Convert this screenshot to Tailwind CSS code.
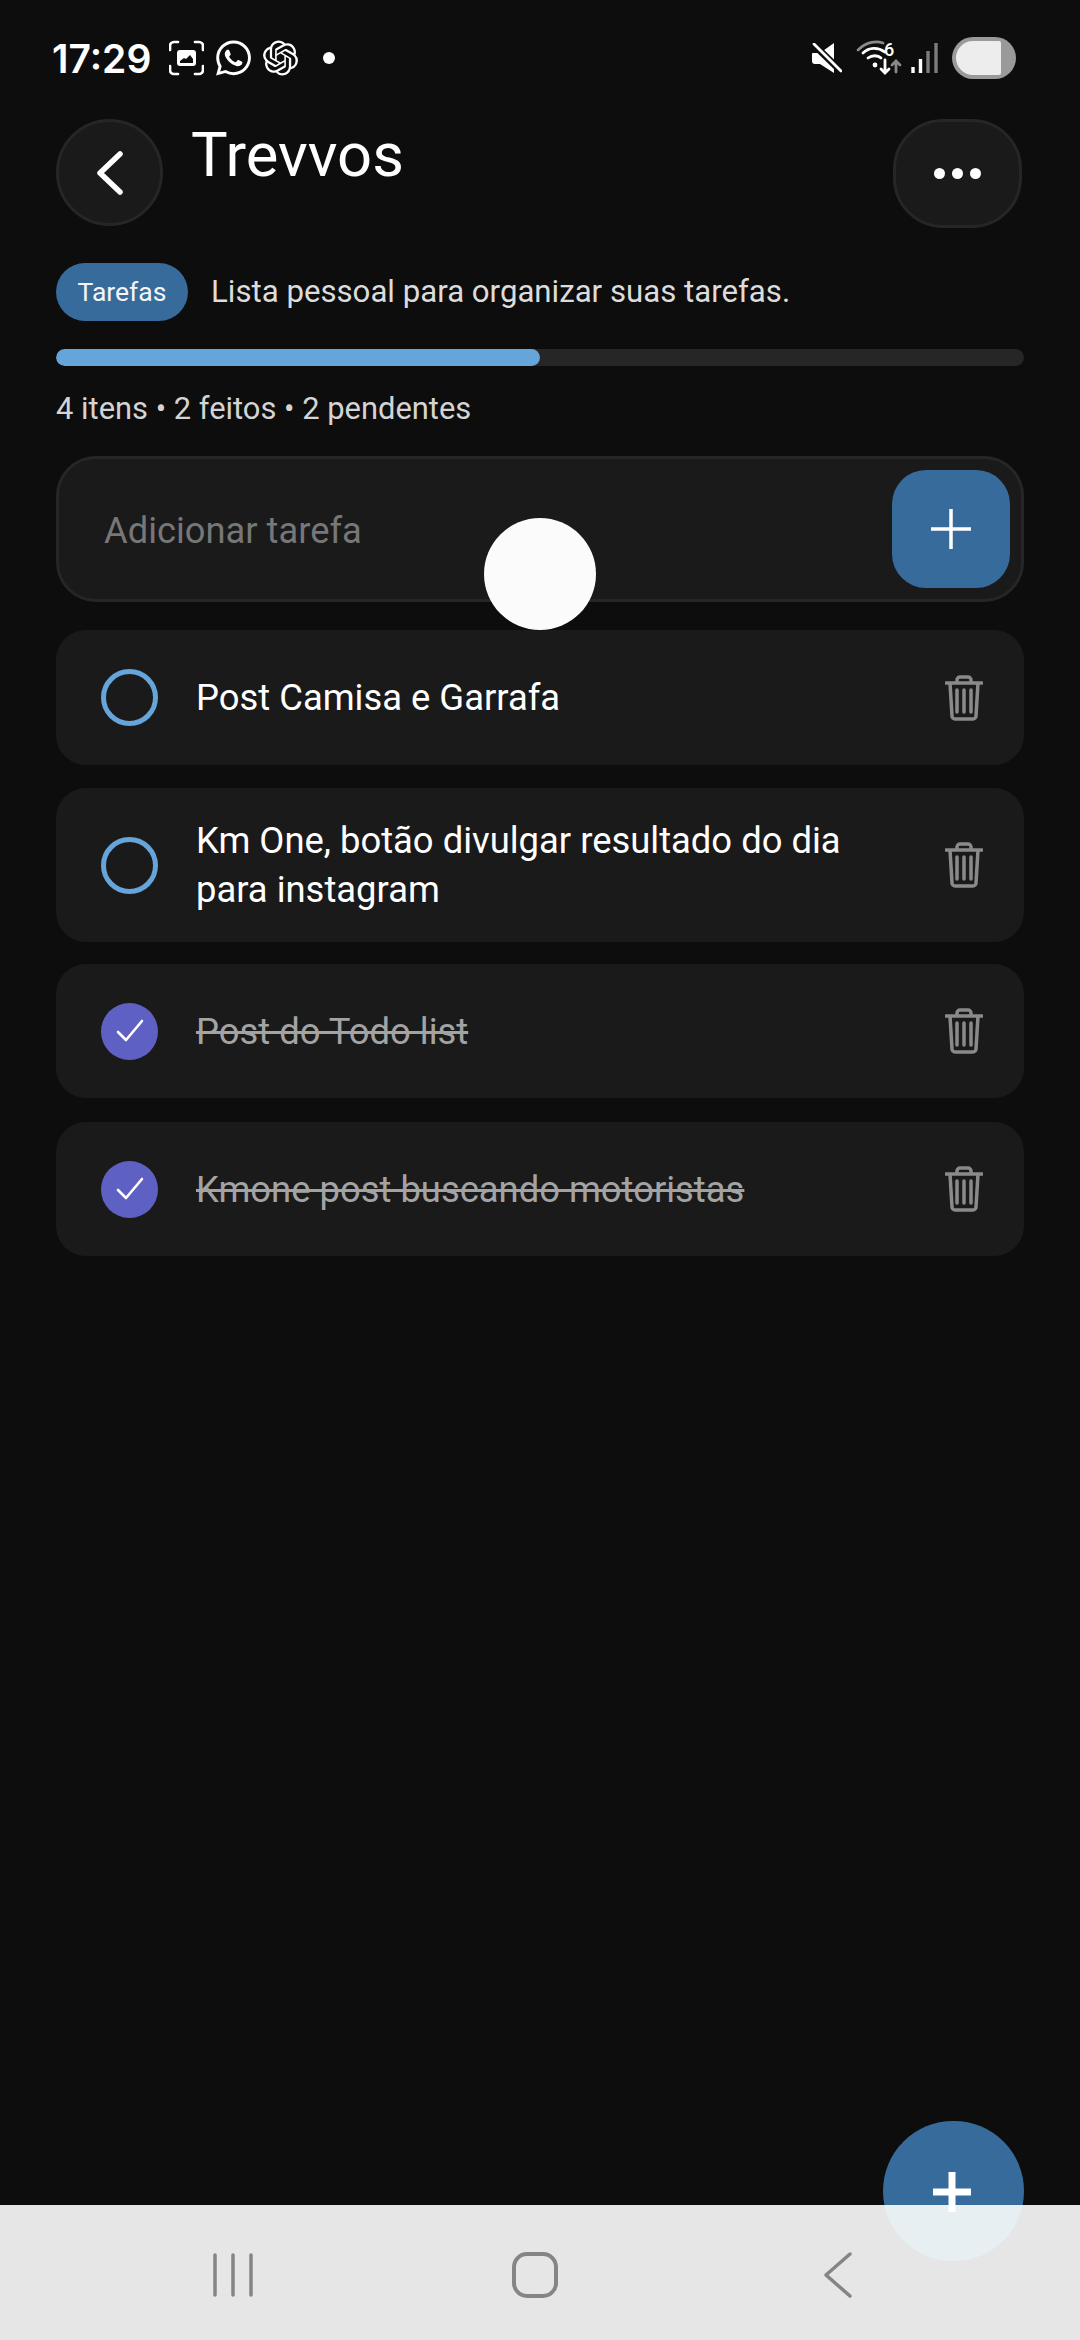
<!DOCTYPE html>
<html lang="pt">
<head>
<meta charset="utf-8">
<script src="https://cdn.jsdelivr.net/npm/@tailwindcss/browser@4"></script>
</head>
<body class="bg-[#0d0d0d]">
<div class="relative w-[1080px] h-[2340px] overflow-hidden bg-[#0d0d0d] font-['Roboto',sans-serif] text-white flex flex-col">

  <!-- status bar -->
  <div class="h-[116px] mb-[3px] pl-[52px] pr-[64px] flex items-center justify-between">
    <div class="flex items-center">
      <span class="font-['Inter',sans-serif] font-semibold text-[39px] leading-none w-[117px]">17:29</span>
      <svg class="w-[35px] h-[36px]" viewBox="0 0 35 36" fill="none" stroke="#fff" stroke-width="2.700" stroke-linecap="round">
        <path d="M9 2H5a4 4 0 0 0-4 4v4M26 2h4a4 4 0 0 1 4 4v4M9 34H5a4 4 0 0 1-4-4v-4M26 34h4a4 4 0 0 0 4-4v-4"/>
        <rect x="8" y="10" width="19" height="16" rx="3" fill="#fff" stroke="none"/>
        <path d="M11 23v-2l4-3 2 1 4-4 3 4v4z" fill="#0d0d0d" stroke="none"/>
      </svg>
      <svg class="ml-[12px] w-[35px] h-[36px]" viewBox="0 0 24 24" fill="#fff"><path d="M17.472 14.382c-.297-.149-1.758-.867-2.03-.967-.273-.099-.471-.148-.67.15-.197.297-.767.966-.94 1.164-.173.199-.347.223-.644.075-.297-.15-1.255-.463-2.39-1.475-.883-.788-1.48-1.761-1.653-2.059-.173-.297-.018-.458.13-.606.134-.133.298-.347.446-.52.149-.174.198-.298.298-.497.099-.198.05-.371-.025-.52-.075-.149-.669-1.612-.916-2.207-.242-.579-.487-.5-.669-.51-.173-.008-.371-.01-.57-.01-.198 0-.52.074-.792.372-.272.297-1.04 1.016-1.04 2.479 0 1.462 1.065 2.875 1.213 3.074.149.198 2.096 3.2 5.077 4.487.709.306 1.262.489 1.694.625.712.227 1.36.195 1.871.118.571-.085 1.758-.719 2.006-1.413.248-.694.248-1.289.173-1.413-.074-.124-.272-.198-.57-.347m-5.421 7.403h-.004a9.87 9.87 0 01-5.031-1.378l-.361-.214-3.741.982.998-3.648-.235-.374a9.86 9.86 0 01-1.51-5.26c.001-5.45 4.436-9.884 9.888-9.884 2.64 0 5.122 1.03 6.988 2.898a9.825 9.825 0 012.893 6.994c-.003 5.45-4.437 9.884-9.885 9.884m8.413-18.297A11.815 11.815 0 0012.05 0C5.495 0 .16 5.335.157 11.892c0 2.096.547 4.142 1.588 5.945L.057 24l6.305-1.654a11.882 11.882 0 005.683 1.448h.005c6.554 0 11.89-5.335 11.893-11.893a11.821 11.821 0 00-3.48-8.413z"/></svg>
      <svg class="ml-[12px] w-[35px] h-[36px]" viewBox="0 0 24 24" fill="#fff"><path d="M22.2819 9.8211a5.9847 5.9847 0 0 0-.5157-4.9108 6.0462 6.0462 0 0 0-6.5098-2.9A6.0651 6.0651 0 0 0 4.9807 4.1818a5.9847 5.9847 0 0 0-3.9977 2.9 6.0462 6.0462 0 0 0 .7427 7.0966 5.98 5.98 0 0 0 .511 4.9107 6.051 6.051 0 0 0 6.5146 2.9001A5.9847 5.9847 0 0 0 13.2599 24a6.0557 6.0557 0 0 0 5.7718-4.2058 5.9894 5.9894 0 0 0 3.9977-2.9001 6.0557 6.0557 0 0 0-.7475-7.0729zm-9.022 12.6081a4.4755 4.4755 0 0 1-2.8764-1.0408l.1419-.0804 4.7783-2.7582a.7948.7948 0 0 0 .3927-.6813v-6.7369l2.02 1.1686a.071.071 0 0 1 .038.052v5.5826a4.504 4.504 0 0 1-4.4945 4.4944zm-9.6607-4.1254a4.4708 4.4708 0 0 1-.5346-3.0137l.142.0852 4.783 2.7582a.7712.7712 0 0 0 .7806 0l5.8428-3.3685v2.3324a.0804.0804 0 0 1-.0332.0615L9.74 19.9502a4.4992 4.4992 0 0 1-6.1408-1.6464zM2.3408 7.8956a4.485 4.485 0 0 1 2.3655-1.9728V11.6a.7664.7664 0 0 0 .3879.6765l5.8144 3.3543-2.0201 1.1685a.0757.0757 0 0 1-.071 0l-4.8303-2.7865A4.504 4.504 0 0 1 2.3408 7.872zm16.5963 3.8558L13.1038 8.364 15.1192 7.2a.0757.0757 0 0 1 .071 0l4.8303 2.7913a4.4944 4.4944 0 0 1-.6765 8.1042v-5.6772a.79.79 0 0 0-.407-.667zm2.0107-3.0231l-.142-.0852-4.7735-2.7818a.7759.7759 0 0 0-.7854 0L9.409 9.2297V6.8974a.0662.0662 0 0 1 .0284-.0615l4.8303-2.7866a4.4992 4.4992 0 0 1 6.6802 4.66zM8.3065 12.863l-2.02-1.1638a.0804.0804 0 0 1-.038-.0567V6.0742a4.4992 4.4992 0 0 1 7.3757-3.4537l-.142.0805L8.704 5.459a.7948.7948 0 0 0-.3927.6813zm1.0976-2.3654l2.602-1.4998 2.6069 1.4998v2.9994l-2.5974 1.4997-2.6067-1.4997Z"/></svg>
      <span class="ml-[25px] w-[12px] h-[12px] rounded-full bg-white"></span>
    </div>
    <div class="flex items-center">
      <svg class="w-[30px] h-[30px]" viewBox="0 0 30 30" fill="#fff"><path d="M0 11q0-1 1-1h7L22 0v30L8 21H3a3 3 0 0 1-3-3z"/><path d="M0 0l30 29" stroke="#0d0d0d" stroke-width="7"/><path d="M2 1l27 27" stroke="#fff" stroke-width="2.800" stroke-linecap="round"/></svg>
      <svg class="ml-[15px] w-[44px] h-[32px] overflow-visible" viewBox="0 0 44 32" fill="none" stroke-linecap="round">
        <path d="M1 8C10-1 20-1 26 1" stroke="#8a8a8a" stroke-width="2.800"/>
        <path d="M6 11c6-6 15-6 22-1M11 16c4-3 10-3 13 0" stroke="#fff" stroke-width="2.800"/>
        <circle cx="18" cy="23" r="2.400" fill="#fff"/>
        <path d="M28 18v13M24 27l4 4 4-4" stroke="#fff" stroke-width="2.800"/>
        <path d="M39 30V19M35 23l4-4 4 4" stroke="#8a8a8a" stroke-width="2.800"/>
        <text x="27" y="14" font-size="18" font-family="Roboto" fill="#fff" stroke="none" font-weight="500">6</text>
      </svg>
      <svg class="ml-[10px] w-[27px] h-[30px]" viewBox="0 0 27 30" fill="none" stroke-width="3.400"><path d="M2 30v-6M9.500 30v-14" stroke="#fff"/><path d="M17 30V8M25 30V0" stroke="#7c7c7c"/></svg>
      <div class="ml-[14px] w-[64px] h-[42px] rounded-[21px] bg-[#9a9a9a] p-[4px]">
        <div class="w-[45px] h-[34px] rounded-l-[17px] rounded-r-[2px] bg-[#ededed]"></div>
      </div>
    </div>
  </div>

  <!-- header -->
  <div class="pl-[56px] pr-[58px] flex items-start justify-between h-[109px]">
    <div class="flex items-start">
      <button class="w-[107px] h-[107px] rounded-full bg-[#1a1a1a] border-[3px] border-[#262626] flex items-center justify-center">
        <svg class="w-[26px] h-[44px]" viewBox="0 0 26 44" fill="none" stroke="#fff" stroke-width="5.500" stroke-linecap="round" stroke-linejoin="round"><path d="M23 3L3 22l20 19"/></svg>
      </button>
      <h1 class="ml-[28px] mt-[1px] text-[61.500px] font-normal leading-[70px]">Trevvos</h1>
    </div>
    <button class="w-[129px] h-[109px] rounded-[50px] bg-[#1a1a1a] border-[3px] border-[#262626] flex items-center justify-center gap-[7px]">
      <span class="w-[11px] h-[11px] rounded-full bg-white"></span>
      <span class="w-[11px] h-[11px] rounded-full bg-white"></span>
      <span class="w-[11px] h-[11px] rounded-full bg-white"></span>
    </button>
  </div>

  <!-- chip row -->
  <div class="mt-[35px] px-[56px] flex items-center h-[58px]">
    <span class="w-[132px] h-[58px] rounded-[29px] bg-[#376b9c] flex items-center justify-center text-[26.500px] text-[#f5f5f5]">Tarefas</span>
    <span class="ml-[23px] text-[31.200px] text-[#dcdcdc]">Lista pessoal para organizar suas tarefas.</span>
  </div>

  <!-- progress -->
  <div class="mt-[28px] mx-[56px] h-[17px] rounded-full bg-[#262626] overflow-hidden">
    <div class="h-full w-1/2 rounded-full bg-[#65a5da]"></div>
  </div>
  <p class="mt-[23px] mb-[-1px] px-[56px] text-[30.900px] leading-[40px] text-[#d4d4d4]">4 itens • 2 feitos • 2 pendentes</p>

  <!-- input -->
  <div class="mt-[28px] mx-[56px] h-[146px] rounded-[40px] bg-[#1a1a1a] border-[3px] border-[#262626] pl-[45px] pr-[11px] flex items-center justify-between">
    <span class="pt-[4px] text-[36.300px] text-[#777777]">Adicionar tarefa</span>
    <button class="w-[118px] h-[118px] rounded-[34px] bg-[#376b9c] flex items-center justify-center">
      <svg class="w-[40px] h-[40px]" viewBox="0 0 40 40" stroke="#fff" stroke-width="3.500"><path d="M20 0v40M0 20h40"/></svg>
    </button>
  </div>

  <!-- list -->
  <ul class="mt-[28px] mx-[56px] flex flex-col gap-[23px]">
    <li class="h-[135px] rounded-[30px] bg-[#1a1a1a] pl-[45px] pr-[41px] flex items-center">
      <span class="shrink-0 w-[57px] h-[57px] rounded-full border-[5px] border-[#65a5da]"></span>
      <span class="ml-[38px] flex-1 text-[36.400px] leading-[49px] text-white">Post Camisa e Garrafa</span>
      <svg class="shrink-0 w-[38px] h-[46px]" viewBox="0 0 38 46" fill="none" stroke="#8a8a8a" stroke-width="3.500" stroke-linecap="round" stroke-linejoin="round"><path d="M1 8h36M12 8V5a3 3 0 0 1 3-3h8a3 3 0 0 1 3 3v3M5 8l2 33a3 3 0 0 0 3 3h18a3 3 0 0 0 3-3l2-33M12 15v22M19 15v22M26 15v22"/></svg>
    </li>
    <li class="h-[154px] rounded-[30px] bg-[#1a1a1a] pl-[45px] pr-[41px] flex items-center">
      <span class="shrink-0 w-[57px] h-[57px] rounded-full border-[5px] border-[#65a5da]"></span>
      <span class="ml-[38px] flex-1 text-[36.400px] leading-[49px] text-white">Km One, botão divulgar resultado do dia<br>para instagram</span>
      <svg class="shrink-0 w-[38px] h-[46px]" viewBox="0 0 38 46" fill="none" stroke="#8a8a8a" stroke-width="3.500" stroke-linecap="round" stroke-linejoin="round"><path d="M1 8h36M12 8V5a3 3 0 0 1 3-3h8a3 3 0 0 1 3 3v3M5 8l2 33a3 3 0 0 0 3 3h18a3 3 0 0 0 3-3l2-33M12 15v22M19 15v22M26 15v22"/></svg>
    </li>
    <li class="-mt-[1px] h-[134px] rounded-[30px] bg-[#1a1a1a] pl-[45px] pr-[41px] flex items-center">
      <span class="shrink-0 w-[57px] h-[57px] rounded-full bg-[#5e60c4] flex items-center justify-center">
        <svg class="w-[28px] h-[24px]" viewBox="0 0 28 24" fill="none" stroke="#fff" stroke-width="2.600" stroke-linecap="round" stroke-linejoin="round"><path d="M2 13l8 8L26 2"/></svg>
      </span>
      <span class="ml-[38px] flex-1 text-[36.400px] leading-[49px] text-[#a3a3a3] line-through">Post do Todo list</span>
      <svg class="shrink-0 w-[38px] h-[46px]" viewBox="0 0 38 46" fill="none" stroke="#8a8a8a" stroke-width="3.500" stroke-linecap="round" stroke-linejoin="round"><path d="M1 8h36M12 8V5a3 3 0 0 1 3-3h8a3 3 0 0 1 3 3v3M5 8l2 33a3 3 0 0 0 3 3h18a3 3 0 0 0 3-3l2-33M12 15v22M19 15v22M26 15v22"/></svg>
    </li>
    <li class="mt-[1px] h-[134px] rounded-[30px] bg-[#1a1a1a] pl-[45px] pr-[41px] flex items-center">
      <span class="shrink-0 w-[57px] h-[57px] rounded-full bg-[#5e60c4] flex items-center justify-center">
        <svg class="w-[28px] h-[24px]" viewBox="0 0 28 24" fill="none" stroke="#fff" stroke-width="2.600" stroke-linecap="round" stroke-linejoin="round"><path d="M2 13l8 8L26 2"/></svg>
      </span>
      <span class="ml-[38px] flex-1 text-[36.400px] leading-[49px] text-[#a3a3a3] line-through">Kmone post buscando motoristas</span>
      <svg class="shrink-0 w-[38px] h-[46px]" viewBox="0 0 38 46" fill="none" stroke="#8a8a8a" stroke-width="3.500" stroke-linecap="round" stroke-linejoin="round"><path d="M1 8h36M12 8V5a3 3 0 0 1 3-3h8a3 3 0 0 1 3 3v3M5 8l2 33a3 3 0 0 0 3 3h18a3 3 0 0 0 3-3l2-33M12 15v22M19 15v22M26 15v22"/></svg>
    </li>
  </ul>

  <!-- navigation bar -->
  <div class="mt-auto h-[135px] bg-[#e6e6e6] grid grid-cols-3 items-center pl-[82px] pr-[91px] pt-[5px]">
    <svg class="justify-self-center w-[42px] h-[46px]" viewBox="0 0 42 46" stroke="#858585" stroke-width="3.500" stroke-linecap="round"><path d="M3 3v40M21 3v40M39 3v40"/></svg>
    <svg class="justify-self-center w-[46px] h-[46px]" viewBox="0 0 46 46" fill="none" stroke="#858585" stroke-width="4"><rect x="2" y="2" width="42" height="42" rx="13"/></svg>
    <svg class="justify-self-center w-[30px] h-[46px]" viewBox="0 0 30 46" fill="none" stroke="#858585" stroke-width="3.500" stroke-linecap="round" stroke-linejoin="round"><path d="M27 2L3 23l24 21"/></svg>
  </div>

  <!-- overlays -->
  <div class="absolute left-[484px] top-[518px] w-[112px] h-[112px] rounded-full bg-[#fbfbfb]"></div>
  <div class="absolute left-[883px] top-[2121px] w-[141px] h-[140px] rounded-full overflow-hidden flex flex-col">
    <div class="h-[84px] bg-[#376b9c]"></div>
    <div class="flex-1 bg-[#e8eff3]"></div>
  </div>
  <svg class="absolute left-[933px] top-[2172px] w-[38px] h-[40px]" viewBox="0 0 38 40" stroke="#fff" stroke-width="7"><path d="M19 0v40M0 20h38"/></svg>
</div>
</body>
</html>
